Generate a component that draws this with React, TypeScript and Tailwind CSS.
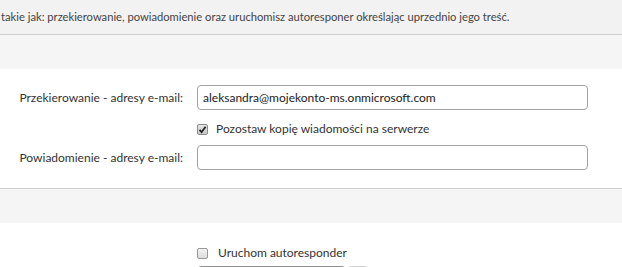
import React from "react";

const font = { fontFamily: "Lato, 'Liberation Sans', sans-serif" };

function Box({ checked }: { checked?: boolean }) {
  return (
    <span
      className={
        checked
          ? "flex h-[11px] w-[11px] items-center justify-center rounded-[2px] border border-[#8c8c8c] bg-gradient-to-b from-[#e6e6e6] to-[#c8c8c8]"
          : "flex h-[11px] w-[11px] items-center justify-center rounded-[2px] border border-[#9a9a9a] bg-gradient-to-b from-[#f4f4f4] to-[#dcdcdc]"
      }
    >
      {checked && (
        <svg width="9" height="9" viewBox="0 0 9 9">
          <path d="M1.5 4.8 L3.6 7 L7.6 1.8" fill="none" stroke="#222" strokeWidth="1.8" />
        </svg>
      )}
    </span>
  );
}

function Row({ label, value }: { label: string; value?: string }) {
  return (
    <div className="flex items-center">
      <label className="w-[184px] pr-[1px] text-right text-[12px] text-[#333]">{label}</label>
      <div className="ml-[13px] flex h-[25px] w-[391px] items-center rounded-[4px] border border-[#a3a3a3] bg-white px-[5px] text-[12px] text-[#222]">
        {value}
      </div>
    </div>
  );
}

export default function App() {
  return (
    <div className="h-[267px] w-[622px] overflow-hidden bg-white" style={font}>
      {/* INTRO */}
      <div className="flex h-[35px] items-center border-b border-[#cfcfcf] bg-[#f2f2f2] pl-[1px] text-[11.2px] text-[#444]">
        takie jak: przekierowanie, powiadomienie oraz uruchomisz autoresponer określając uprzednio jego treść.
      </div>
      <div className="h-[34px] bg-[#f5f5f5]" />

      {/* FORWARDING */}
      <div className="border-b border-[#cfcfcf] pt-[16px] pb-[18px]">
        <Row label="Przekierowanie - adresy e-mail:" value="aleksandra@mojekonto-ms.onmicrosoft.com" />
        <div className="mt-[9px] flex h-[20px] items-center pl-[197px]">
          <Box checked />
          <span className="ml-[8px] text-[12px] text-[#333]">Pozostaw kopię wiadomości na serwerze</span>
        </div>
        <div className="mt-[6px]">
          <Row label="Powiadomienie - adresy e-mail:" />
        </div>
      </div>
      <div className="h-[34px] bg-[#f5f5f5]" />

      {/* AUTORESPONDER */}
      <div className="pt-[20px]">
        <div className="flex h-[20px] items-center pl-[197px]">
          <Box />
          <span className="ml-[10px] text-[12px] text-[#333]">Uruchom autoresponder</span>
        </div>
        <div className="mt-[3px] flex gap-[1px] pl-[197px]">
          <div className="h-[25px] w-[149px] rounded-[4px] border border-[#8f8f8f]" />
          <div className="h-[25px] w-[22px] rounded-[4px] border border-[#cfcfcf]" />
        </div>
      </div>
    </div>
  );
}
